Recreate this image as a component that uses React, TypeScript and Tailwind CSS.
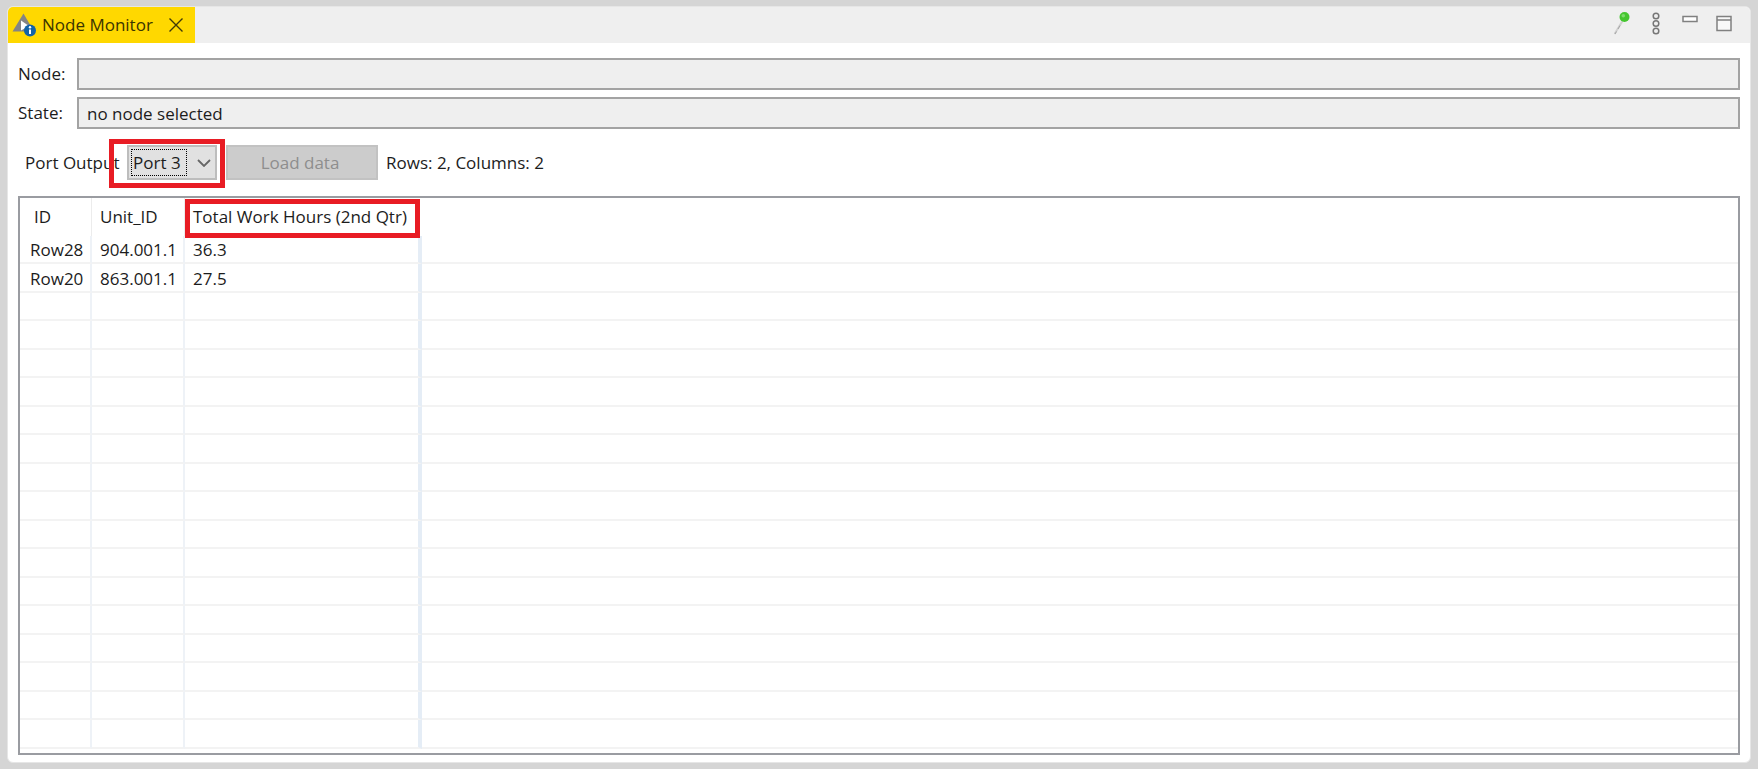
import React, { useState } from "react";
import { clsx } from "clsx";

interface IRow {
  id: string;
  unitId: string;
  hours: string;
}

const VISIBLE_ROWS = 18;

const data: IRow[] = [
  { id: "Row28", unitId: "904.001.1", hours: "36.3" },
  { id: "Row20", unitId: "863.001.1", hours: "27.5" },
];

const rows: (IRow | null)[] = Array.from(
  { length: VISIBLE_ROWS },
  (_, index) => data[index] ?? null
);

const Highlight = ({ className }: { className?: string }) => (
  <div
    className={clsx(
      "pointer-events-none absolute border-5 border-[#e81c24]",
      className
    )}
  />
);

const MonitorIcon = () => (
  <svg width="24" height="24" viewBox="0 0 24 24" aria-hidden="true">
    <path d="M11.5 0.5 22 18.5H0.5z" fill="#848484" />
    <path d="M9 7.5 17 13 9 17.5z" fill="#fff" />
    <circle cx="18" cy="17.5" r="6" fill="#1263a8" />
    <circle cx="18" cy="14.2" r="1.2" fill="#fff" />
    <path d="M17 16.4h2v4.6h-2z" fill="#fff" />
  </svg>
);

const CloseIcon = () => (
  <svg width="14" height="14" viewBox="0 0 14 14" aria-hidden="true">
    <path d="M0.5 0.5l13 13M13.5 0.5l-13 13" stroke="#40390a" strokeWidth="1.4" />
  </svg>
);

const PinIcon = () => (
  <svg width="16" height="24" viewBox="0 0 16 24" aria-hidden="true">
    <path d="M8.5 9 0.5 22" stroke="#d0d0d0" strokeWidth="2" />
    <path d="M6 13.5 4 17M2.5 19.5 1 22" stroke="#a4a4a4" strokeWidth="1" />
    <circle cx="10.5" cy="5" r="5" fill="#45c62f" />
    <circle cx="9.3" cy="3.7" r="1.8" fill="#7edb6c" />
  </svg>
);

const MenuIcon = () => (
  <svg width="8" height="24" viewBox="0 0 8 24" fill="none" stroke="#777" strokeWidth="1.5" aria-hidden="true">
    <circle cx="4" cy="4" r="2.8" />
    <circle cx="4" cy="11.5" r="2.8" />
    <circle cx="4" cy="19" r="2.8" />
  </svg>
);

const MinimizeIcon = () => (
  <svg width="16" height="24" viewBox="0 0 16 24" aria-hidden="true">
    <rect x="1" y="4.5" width="14" height="5" fill="#fff" stroke="#808080" strokeWidth="1.5" />
  </svg>
);

const MaximizeIcon = () => (
  <svg width="16" height="24" viewBox="0 0 16 24" aria-hidden="true">
    <rect x="1" y="4.5" width="14" height="14" fill="#f8f8f8" stroke="#808080" strokeWidth="1.5" />
    <path d="M1 8h14" stroke="#808080" strokeWidth="1.5" />
  </svg>
);

interface IFieldProps {
  id: string;
  label: string;
  value: string;
}

const Field = ({ id, label, value }: IFieldProps) => (
  <div className="flex items-center">
    <label htmlFor={id} className="w-[59px] shrink-0">
      {label}
    </label>
    <input
      id={id}
      value={value}
      readOnly
      className="h-8 min-w-0 flex-1 border-2 border-[#a3a3a3] bg-[#efefef] px-2 outline-none"
    />
  </div>
);

const DataTable = () => (
  <div className="mt-2 min-h-0 flex-1 overflow-hidden border-2 border-[#9a9ca1]">
    <table className="w-full table-fixed border-separate border-spacing-0 text-left">
      <colgroup>
        <col className="w-[72px]" />
        <col className="w-[93px]" />
        <col className="w-[237px]" />
        <col />
      </colgroup>
      <thead>
        <tr className="h-[38px]">
          <th className="border-r border-[#ececec] py-0 pl-[14px] font-normal">ID</th>
          <th className="border-r border-[#ececec] py-0 pl-2 font-normal">Unit_ID</th>
          <th className="relative py-0 pl-2 font-normal whitespace-nowrap">
            Total Work Hours (2nd Qtr)
            <Highlight className="top-px right-[2px] -bottom-[2px] left-0" />
          </th>
          <th />
        </tr>
      </thead>
      <tbody>
        {rows.map((row, index) => (
          <tr key={index} className="h-7 even:h-[29px]">
            <td className="border-r-2 border-b-2 border-r-[#eef2f7] border-b-[#f3f3f3] pt-[2px] pb-0 pl-[10px]">
              {row?.id}
            </td>
            <td className="border-r-2 border-b-2 border-r-[#eef2f7] border-b-[#f3f3f3] pt-[2px] pb-0 pl-2">
              {row?.unitId}
            </td>
            <td className="border-r-4 border-b-2 border-r-[#e5edf6] border-b-[#f3f3f3] pt-[2px] pb-0 pl-2">
              {row?.hours}
            </td>
            <td className="border-b-2 border-b-[#f3f3f3] p-0" />
          </tr>
        ))}
      </tbody>
    </table>
  </div>
);

export default function App() {
  const [port, setPort] = useState("Port 3");

  return (
    <div className="flex h-screen flex-col bg-[#d5d5d5] px-[7px] py-[6px] font-['Open_Sans','Noto_Sans',sans-serif] text-[17px] leading-6 text-[#1c1c1c]">
      <main className="flex min-h-0 flex-1 flex-col overflow-hidden rounded-md border border-[#e6e6e6] bg-white">
        <header className="flex h-9 shrink-0 items-center justify-between bg-[#efefef] pr-[18px]">
          <div className="flex h-full items-center bg-[#ffd800] pr-3 pl-1 text-[#3b3500]">
            <MonitorIcon />
            <span className="ml-[6px] whitespace-nowrap">Node Monitor</span>
            <button type="button" aria-label="Close" className="ml-4">
              <CloseIcon />
            </button>
          </div>
          <div className="flex items-center pb-[2px]">
            <button type="button" aria-label="Pin">
              <PinIcon />
            </button>
            <button type="button" aria-label="View menu" className="ml-[22px]">
              <MenuIcon />
            </button>
            <button type="button" aria-label="Minimize" className="ml-[22px]">
              <MinimizeIcon />
            </button>
            <button type="button" aria-label="Maximize" className="ml-[18px]">
              <MaximizeIcon />
            </button>
          </div>
        </header>

        <div className="flex min-h-0 flex-1 flex-col px-[10px] pt-[15px] pb-[7px]">
          <div className="flex flex-col gap-[7px]">
            <Field id="node" label="Node:" value="" />
            <Field id="state" label="State:" value="no node selected" />
          </div>

          <div className="relative mt-2 flex h-[51px] items-center pl-[7px]">
            <label htmlFor="port" className="w-[102px] whitespace-nowrap">
              Port Output
            </label>
            <div className="relative">
              <select
                id="port"
                value={port}
                onChange={(e: React.ChangeEvent<HTMLSelectElement>) =>
                  setPort(e.target.value)
                }
                className="block h-[35px] w-[90px] appearance-none border-2 border-[#bdbdbd] bg-[#e1e1e1] pl-1 outline-none"
              >
                <option>Port 1</option>
                <option>Port 2</option>
                <option>Port 3</option>
              </select>
              <span className="pointer-events-none absolute top-1 left-1 h-[27px] w-14 border border-dotted border-black" />
              <svg
                width="14"
                height="8"
                viewBox="0 0 14 8"
                className="pointer-events-none absolute top-[14px] right-[6px]"
                aria-hidden="true"
              >
                <path d="M1 1l6 6 6-6" fill="none" stroke="#666" strokeWidth="1.8" />
              </svg>
              <Highlight className="-top-[6px] -right-2 -bottom-2 -left-[18px]" />
            </div>
            <button
              type="button"
              disabled
              className="ml-[9px] h-[35px] w-[152px] border-2 border-[#c2c2c2] bg-[#cccccc] pr-1 text-[#8e8e8e]"
            >
              Load data
            </button>
            <span className="ml-2 whitespace-nowrap">Rows: 2, Columns: 2</span>
          </div>

          <DataTable />
        </div>
      </main>
    </div>
  );
}
